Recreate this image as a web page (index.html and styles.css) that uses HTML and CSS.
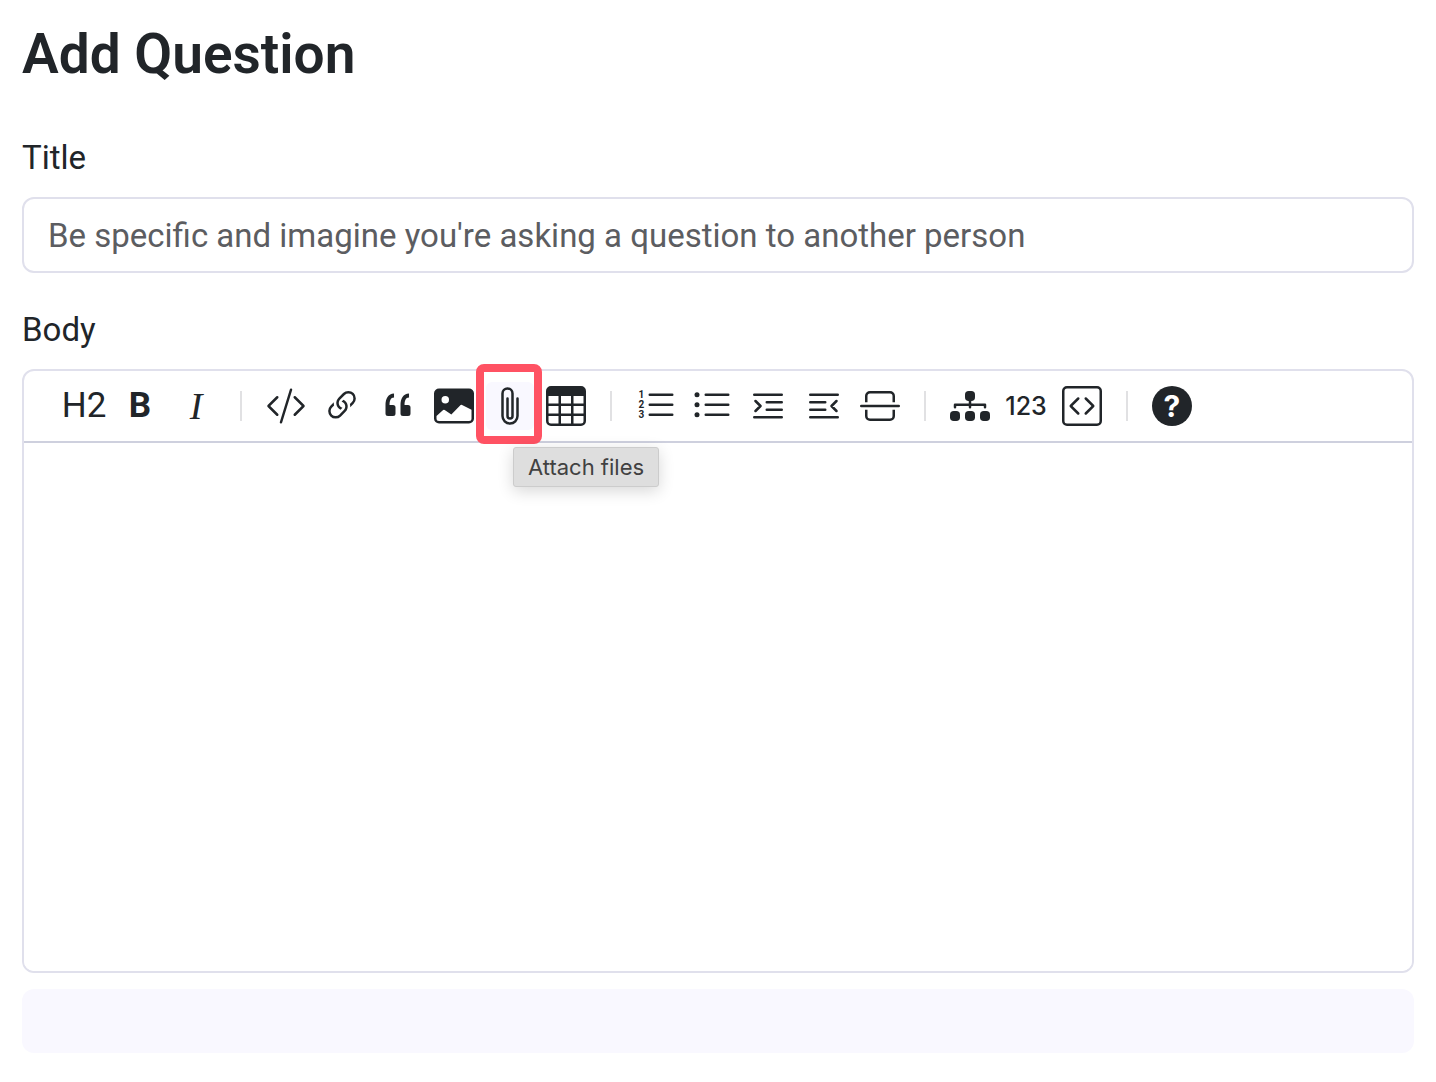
FILE: index.html
```html
<!DOCTYPE html>
<html lang="en">
<head>
<meta charset="utf-8">
<meta name="viewport" content="width=device-width, initial-scale=1">
<title>Add Question</title>
<link rel="stylesheet" href="styles.css">
</head>
<body>
<main class="page">
  <h1 class="page-title">Add Question</h1>
  <form class="form">
    <div class="field">
      <label class="label" for="title">Title</label>
      <input class="input" id="title" type="text" placeholder="Be specific and imagine you're asking a question to another person">
    </div>
    <div class="field">
      <label class="label" for="body">Body</label>
      <div class="editor">
        <div class="toolbar" role="toolbar" aria-label="Formatting">
          <button class="tool tool-heading" type="button" aria-label="Heading">H2</button>
          <button class="tool tool-bold" type="button" aria-label="Bold">B</button>
          <button class="tool tool-italic" type="button" aria-label="Italic">I</button>
          <span class="divider"></span>
          <button class="tool" type="button" aria-label="Code"><svg class="icon" viewBox="0 0 16 16"><path d="M10.478 1.647a.5.5 0 1 0-.956-.294l-4 13a.5.5 0 0 0 .956.294l4-13zM4.854 4.146a.5.5 0 0 1 0 .708L1.707 8l3.147 3.146a.5.5 0 0 1-.708.708l-3.5-3.5a.5.5 0 0 1 0-.708l3.5-3.5a.5.5 0 0 1 .708 0zm6.292 0a.5.5 0 0 0 0 .708L14.293 8l-3.147 3.146a.5.5 0 0 0 .708.708l3.5-3.5a.5.5 0 0 0 0-.708l-3.5-3.5a.5.5 0 0 0-.708 0z"/></svg></button>
          <button class="tool" type="button" aria-label="Link"><svg class="icon" viewBox="0 0 16 16"><path d="M4.715 6.542 3.343 7.914a3 3 0 1 0 4.243 4.243l1.828-1.829A3 3 0 0 0 8.586 5.5L8 6.086a1.002 1.002 0 0 0-.154.199 2 2 0 0 1 .861 3.337L6.88 11.45a2 2 0 1 1-2.83-2.83l.793-.792a4.018 4.018 0 0 1-.128-1.287z"/><path d="M6.586 4.672A3 3 0 0 0 7.414 9.5l.775-.776a2 2 0 0 1-.896-3.346L9.12 3.55a2 2 0 1 1 2.83 2.83l-.793.792c.112.42.155.855.128 1.287l1.372-1.372a3 3 0 1 0-4.243-4.243L6.586 4.672z"/></svg></button>
          <button class="tool" type="button" aria-label="Quote"><svg class="icon" viewBox="0 0 16 16"><path d="M12 12a1 1 0 0 0 1-1V8.558a1 1 0 0 0-1-1h-1.388c0-.351.021-.703.062-1.054.062-.372.166-.703.31-.992.145-.29.331-.517.559-.683.227-.186.516-.279.868-.279V3c-.579 0-1.085.124-1.52.372a3.322 3.322 0 0 0-1.085.992 4.92 4.92 0 0 0-.62 1.458A7.712 7.712 0 0 0 9 7.558V11a1 1 0 0 0 1 1h2Zm-6 0a1 1 0 0 0 1-1V8.558a1 1 0 0 0-1-1H4.612c0-.351.021-.703.062-1.054.062-.372.166-.703.31-.992.145-.29.331-.517.559-.683.227-.186.516-.279.868-.279V3c-.579 0-1.085.124-1.52.372a3.322 3.322 0 0 0-1.085.992 4.92 4.92 0 0 0-.62 1.458A7.712 7.712 0 0 0 3 7.558V11a1 1 0 0 0 1 1h2Z"/></svg></button>
          <button class="tool" type="button" aria-label="Image"><svg class="icon" viewBox="0 0 16 16"><path d="M.002 3a2 2 0 0 1 2-2h12a2 2 0 0 1 2 2v10a2 2 0 0 1-2 2h-12a2 2 0 0 1-2-2V3zm1 9v1a1 1 0 0 0 1 1h12a1 1 0 0 0 1-1V9.5l-3.777-1.947a.5.5 0 0 0-.577.093l-3.71 3.71-2.66-1.772a.5.5 0 0 0-.63.062L1.002 12zm5-6.5a1.5 1.5 0 1 0-3 0 1.5 1.5 0 0 0 3 0z"/></svg></button>
          <button class="tool tool-active" type="button" aria-describedby="attach-tip" aria-label="Attach files"><svg class="icon" viewBox="0 0 16 16"><path d="M4.5 3a2.5 2.5 0 0 1 5 0v9a1.5 1.5 0 0 1-3 0V5a.5.5 0 0 1 1 0v7a.5.5 0 0 0 1 0V3a1.5 1.5 0 1 0-3 0v9a2.5 2.5 0 0 0 5 0V5a.5.5 0 0 1 1 0v7a3.5 3.5 0 1 1-7 0V3z"/></svg><span class="tooltip" id="attach-tip" role="tooltip">Attach files</span></button>
          <button class="tool" type="button" aria-label="Table"><svg class="icon" viewBox="0 0 16 16"><path d="M0 2a2 2 0 0 1 2-2h12a2 2 0 0 1 2 2v12a2 2 0 0 1-2 2H2a2 2 0 0 1-2-2V2zm15 2h-4v3h4V4zm0 4h-4v3h4V8zm0 4h-4v3h3a1 1 0 0 0 1-1v-2zm-5 3v-3H6v3h4zm-5 0v-3H1v2a1 1 0 0 0 1 1h3zm-4-4h4V8H1v3zm0-4h4V4H1v3zm5-3v3h4V4H6zm4 4H6v3h4V8z"/></svg></button>
          <span class="divider"></span>
          <button class="tool" type="button" aria-label="Numbered list"><svg class="icon" viewBox="0 0 16 16"><path class="line" d="M5.5 3.5h9M5.5 7.5h9M5.5 11.5h9"/><g class="list-number"><text x="1" y="4.8">1</text><text x="1" y="8.8">2</text><text x="1" y="12.8">3</text></g></svg></button>
          <button class="tool" type="button" aria-label="Bulleted list"><svg class="icon" viewBox="0 0 16 16"><path class="line" d="M5.5 3.5h9M5.5 7.5h9M5.5 11.5h9"/><circle cx="2" cy="3.5" r="1"/><circle cx="2" cy="7.5" r="1"/><circle cx="2" cy="11.5" r="1"/></svg></button>
          <button class="tool" type="button" aria-label="Indent"><svg class="icon" viewBox="0 0 16 16"><path class="line" d="M2.5 3.5h11M7.5 6.5h6M7.5 9.5h6M2.5 12.5h11M3 6l2 2-2 2"/></svg></button>
          <button class="tool" type="button" aria-label="Outdent"><svg class="icon" viewBox="0 0 16 16"><path class="line" d="M2.5 3.5h11M2.5 6.5h6M2.5 9.5h6M2.5 12.5h11M13 6l-2 2 2 2"/></svg></button>
          <button class="tool" type="button" aria-label="Horizontal rule"><svg class="icon" viewBox="0 0 16 16"><path d="M12 3H4a1 1 0 0 0-1 1v2.500H2V4a2 2 0 0 1 2-2h8a2 2 0 0 1 2 2v2.500h-1V4a1 1 0 0 0-1-1zM2 9.500h1V12a1 1 0 0 0 1 1h8a1 1 0 0 0 1-1V9.500h1V12a2 2 0 0 1-2 2H4a2 2 0 0 1-2-2V9.500zm-1.500-2a.5.5 0 0 0 0 1h15a.5.5 0 0 0 0-1H.5z"/></svg></button>
          <span class="divider"></span>
          <button class="tool" type="button" aria-label="Diagram"><svg class="icon" viewBox="0 0 16 16"><path d="M6 3.5A1.500 1.500 0 0 1 7.500 2h1A1.500 1.500 0 0 1 10 3.500v1A1.500 1.500 0 0 1 8.500 6v1H14a.5.5 0 0 1 .5.5v1a.5.5 0 0 1-1 0V8h-5v.5a.5.5 0 0 1-1 0V8h-5v.5a.5.5 0 0 1-1 0v-1A.5.5 0 0 1 2 7h5.500V6A1.500 1.500 0 0 1 6 4.500v-1z"/><rect x="0" y="10" width="4" height="4" rx="1.500"/><rect x="6" y="10" width="4" height="4" rx="1.500"/><rect x="12" y="10" width="4" height="4" rx="1.500"/></svg></button>
          <button class="tool tool-number" type="button" aria-label="Formula">123</button>
          <button class="tool" type="button" aria-label="Code block"><svg class="icon" viewBox="0 0 16 16"><path d="M14 1a1 1 0 0 1 1 1v12a1 1 0 0 1-1 1H2a1 1 0 0 1-1-1V2a1 1 0 0 1 1-1h12zM2 0a2 2 0 0 0-2 2v12a2 2 0 0 0 2 2h12a2 2 0 0 0 2-2V2a2 2 0 0 0-2-2H2z"/><path d="M6.854 4.646a.5.5 0 0 1 0 .708L4.207 8l2.647 2.646a.5.5 0 0 1-.708.708l-3-3a.5.5 0 0 1 0-.708l3-3a.5.5 0 0 1 .708 0zm2.292 0a.5.5 0 0 0 0 .708L11.793 8l-2.647 2.646a.5.5 0 0 0 .708.708l3-3a.5.5 0 0 0 0-.708l-3-3a.5.5 0 0 0-.708 0z"/></svg></button>
          <span class="divider"></span>
          <button class="tool" type="button" aria-label="Help"><span class="help">?</span></button>
        </div>
        <textarea class="body-input" id="body"></textarea>
      </div>
      <div class="preview"></div>
    </div>
  </form>
</main>
</body>
</html>
```
FILE: styles.css
```css
*, *::before, *::after {
  box-sizing: border-box;
}

body {
  margin: 0;
  background: #fff;
  color: #212529;
  font-family: Roboto, "Liberation Sans", sans-serif;
  font-size: 33px;
  line-height: 48px;
}

.page {
  padding: 20px 22px 28px;
}

.page-title {
  margin: 0 0 46px;
  font-size: 55px;
  font-weight: 600;
  line-height: 68px;
}

.form {
  display: flex;
  flex-direction: column;
  gap: 33px;
}

.field {
  display: flex;
  flex-direction: column;
}

.label {
  align-self: flex-start;
  margin-bottom: 15px;
}

.input {
  width: 100%;
  height: 76px;
  padding: 12px 24px;
  border: 2px solid #e0e0ec;
  border-radius: 12px;
  background: #fff;
  color: inherit;
  font: inherit;
}

.input::placeholder {
  color: #5c5d61;
  opacity: 1;
}

.editor {
  border: 2px solid #e0e0ec;
  border-radius: 12px;
}

.toolbar {
  display: flex;
  align-items: center;
  gap: 8px;
  padding: 11px 36px;
  border-bottom: 2px solid #ced0de;
}

.tool {
  display: flex;
  flex: none;
  align-items: center;
  justify-content: center;
  width: 48px;
  height: 48px;
  padding: 0;
  border: 0;
  border-radius: 6px;
  background: none;
  color: inherit;
  font: inherit;
}

.tool-heading {
  font-size: 35px;
}

.tool-bold {
  font-size: 35px;
  font-weight: 700;
}

.tool-italic {
  font-family: "Liberation Serif", serif;
  font-size: 38px;
  font-style: italic;
}

.tool-number {
  font-family: Inter, sans-serif;
  font-size: 25px;
  font-weight: 500;
}

.tool-active {
  position: relative;
  background: #f9f8ff;
}

.tool-active::after {
  content: "";
  position: absolute;
  inset: -18px -8px -14px -10px;
  border: 8px solid #ff5263;
  border-radius: 8px;
}

.tooltip {
  position: absolute;
  top: 65px;
  left: 27px;
  z-index: 1;
  padding: 4px 14px;
  border: 1px solid #ccc;
  border-radius: 3px;
  background: #dedede;
  box-shadow: 0 4px 16px rgba(0, 0, 0, 0.16);
  color: #414141;
  font-family: Inter, sans-serif;
  font-size: 22px;
  line-height: 30px;
  white-space: nowrap;
}

.divider {
  width: 2px;
  height: 30px;
  margin: 0 12px;
  background: #e1e1e3;
}

.icon {
  width: 40px;
  height: 40px;
  fill: currentColor;
}

.line {
  fill: none;
  stroke: currentColor;
  stroke-linecap: round;
  stroke-linejoin: round;
}

.list-number {
  font-family: Roboto, sans-serif;
  font-size: 4px;
  font-weight: 700;
}

.help {
  width: 40px;
  border-radius: 50%;
  background: #212529;
  color: #fff;
  font-family: Inter, sans-serif;
  font-size: 30px;
  font-weight: 700;
  line-height: 40px;
}

.body-input {
  display: block;
  width: 100%;
  height: 528px;
  padding: 24px;
  border: 0;
  border-radius: 0 0 10px 10px;
  background: #fff;
  color: inherit;
  font: inherit;
  resize: none;
}

.preview {
  min-height: 64px;
  margin-top: 16px;
  border-radius: 12px;
  background: #f9f8ff;
}
```
